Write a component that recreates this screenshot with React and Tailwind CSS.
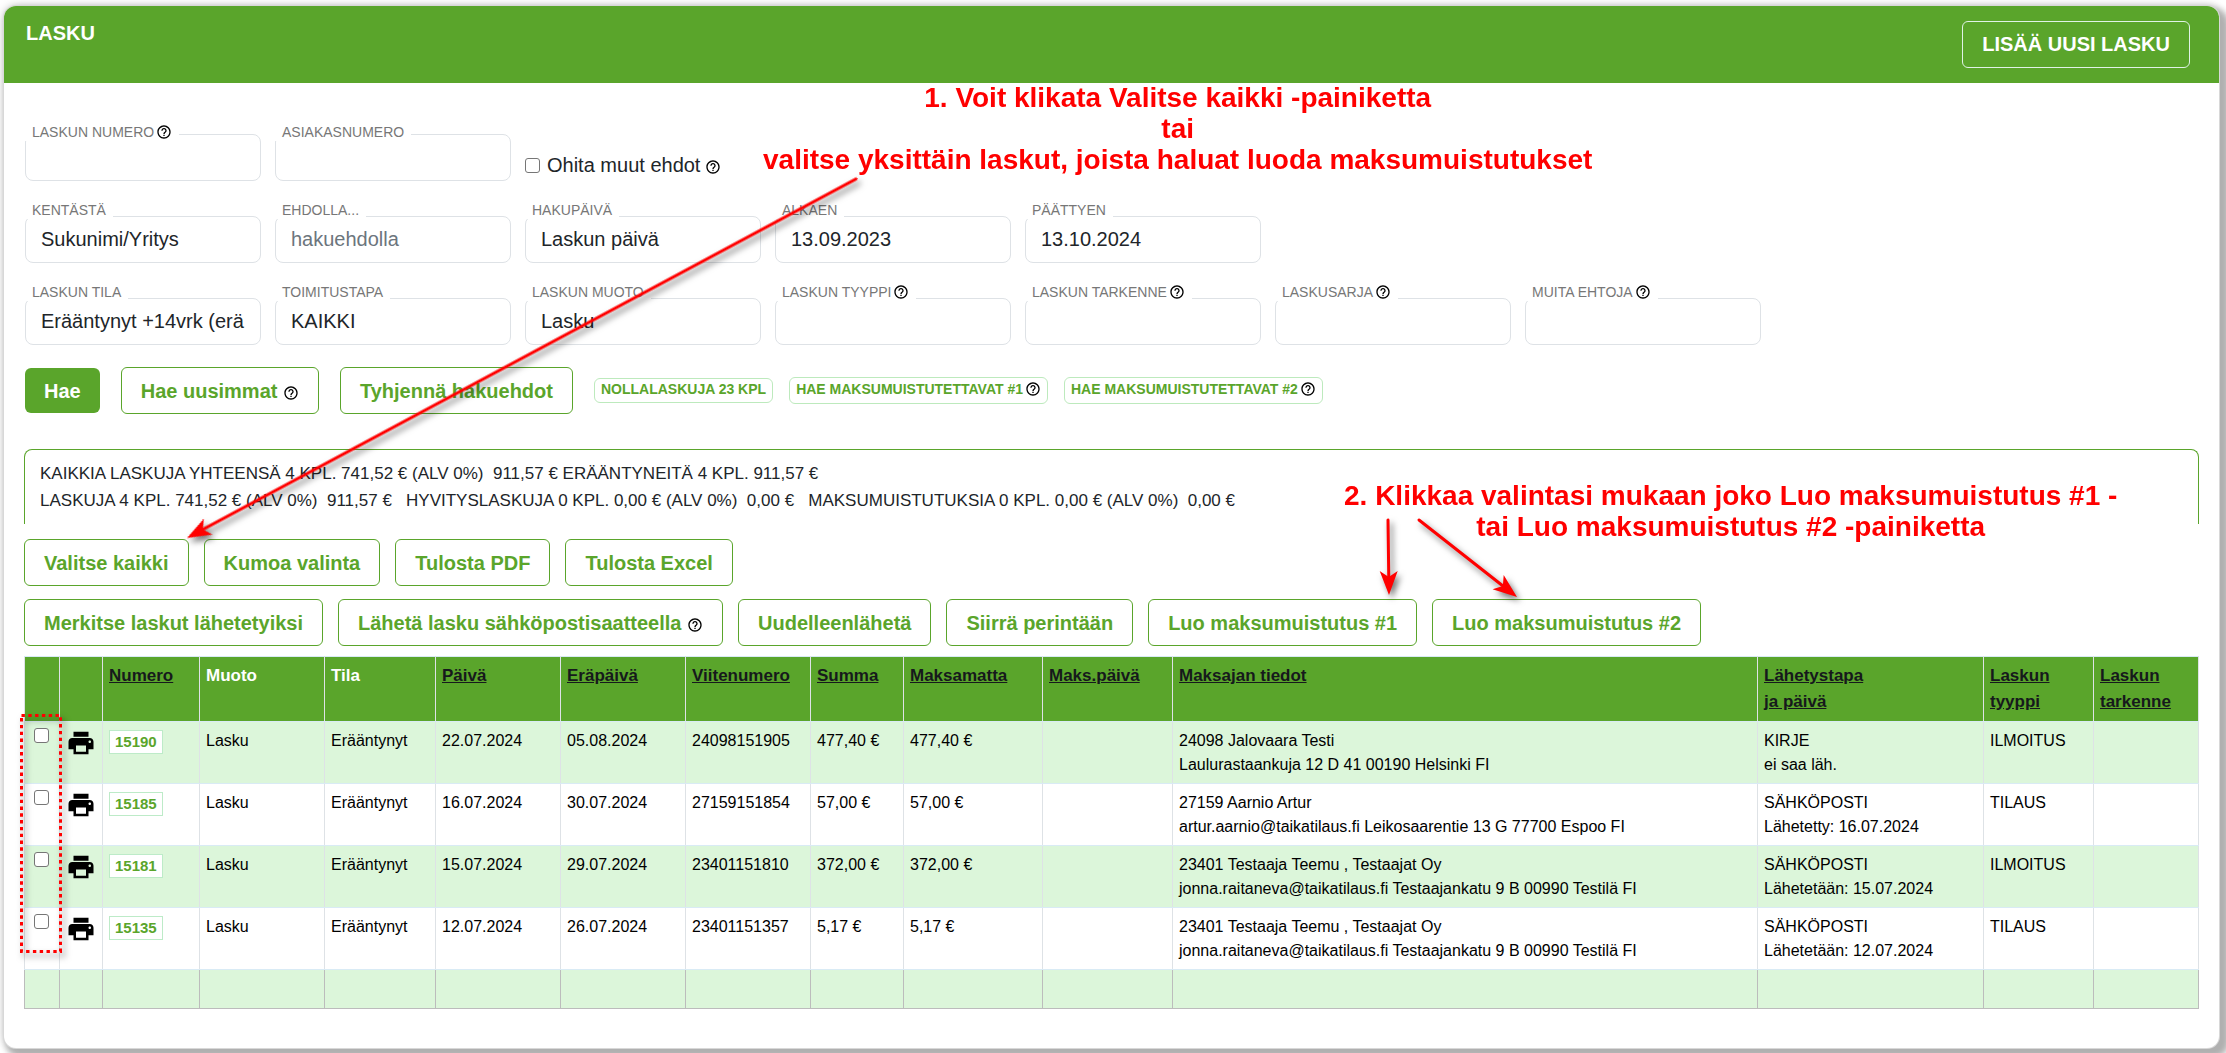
import { MdHelpOutline, MdPrint } from "react-icons/md";

const outline =
  "h-[47px] rounded-md border border-[#5aa52b] bg-white px-[19px] text-[20px] leading-[30px] font-bold whitespace-nowrap text-[#5aa52b]";
const badge =
  "rounded-md border border-[#bdeabd] bg-white px-[6px] pb-[2px] text-[14px] leading-[21px] font-bold whitespace-nowrap text-[#5aa52b]";

function Help({ className = "" }) {
  return (
    <MdHelpOutline
      aria-hidden="true"
      className={"inline-block size-4 align-[-3px] text-black " + className}
    />
  );
}

function Field({ id, label, value, placeholder, help, low }) {
  return (
    <div className="relative w-[236px]">
      <label
        htmlFor={id}
        className={
          "absolute left-0 bg-white px-[7px] text-[14px] leading-[18px] whitespace-nowrap text-[#777] " +
          (low ? "-top-[11px]" : "-top-[15px]")
        }
      >
        {label}
        {help && <Help className="ml-[2px]" />}
      </label>
      <input
        id={id}
        type="text"
        defaultValue={value}
        placeholder={placeholder}
        className="block h-[47px] w-full rounded-lg border border-[#dee2e6] bg-white px-[15px] text-[20px] text-[#212529] placeholder:text-[#6c757d]"
      />
    </div>
  );
}

const columns = [
  { lines: [], w: "w-[35px]" },
  { lines: [], w: "w-[43px]" },
  { lines: ["Numero"], w: "w-[97px]", sort: true },
  { lines: ["Muoto"], w: "w-[125px]" },
  { lines: ["Tila"], w: "w-[111px]" },
  { lines: ["Päivä"], w: "w-[125px]", sort: true },
  { lines: ["Eräpäivä"], w: "w-[125px]", sort: true },
  { lines: ["Viitenumero"], w: "w-[125px]", sort: true },
  { lines: ["Summa"], w: "w-[93px]", sort: true },
  { lines: ["Maksamatta"], w: "w-[139px]", sort: true },
  { lines: ["Maks.päivä"], w: "w-[130px]", sort: true },
  { lines: ["Maksajan tiedot"], w: "", sort: true },
  { lines: ["Lähetystapa", "ja päivä"], w: "w-[226px]", sort: true },
  { lines: ["Laskun", "tyyppi"], w: "w-[110px]", sort: true },
  { lines: ["Laskun", "tarkenne"], w: "w-[105px]", sort: true },
];

const rows = [
  ["15190", "22.07.2024", "05.08.2024", "24098151905", "477,40 €", "24098 Jalovaara Testi", "Laulurastaankuja 12 D 41 00190 Helsinki FI", "KIRJE", "ei saa läh.", "ILMOITUS"],
  ["15185", "16.07.2024", "30.07.2024", "27159151854", "57,00 €", "27159 Aarnio Artur", "artur.aarnio@taikatilaus.fi Leikosaarentie 13 G 77700 Espoo FI", "SÄHKÖPOSTI", "Lähetetty: 16.07.2024", "TILAUS"],
  ["15181", "15.07.2024", "29.07.2024", "23401151810", "372,00 €", "23401 Testaaja Teemu , Testaajat Oy", "jonna.raitaneva@taikatilaus.fi Testaajankatu 9 B 00990 Testilä FI", "SÄHKÖPOSTI", "Lähetetään: 15.07.2024", "ILMOITUS"],
  ["15135", "12.07.2024", "26.07.2024", "23401151357", "5,17 €", "23401 Testaaja Teemu , Testaajat Oy", "jonna.raitaneva@taikatilaus.fi Testaajankatu 9 B 00990 Testilä FI", "SÄHKÖPOSTI", "Lähetetään: 12.07.2024", "TILAUS"],
];

const frame = "border-x border-y border-x-[#dee2e6] border-y-[#d9ebf5] align-top";
const cell = frame + " px-[6px] pt-[7px] pb-[5px]";
const iconCell = frame + " p-[6px]";

function InvoiceTable() {
  return (
    <table className="mt-[10px] w-full table-fixed border-collapse text-left text-[16px] leading-6 text-black">
      <colgroup>
        {columns.map((c, i) => (
          <col key={i} className={c.w} />
        ))}
      </colgroup>
      <thead>
        <tr className="h-[65px] bg-[#5aa52b] text-[17px] leading-[26px] text-white">
          {columns.map((c, i) => (
            <th key={i} scope="col" className={frame + " px-[6px] py-[6px] font-bold"}>
              {c.sort ? (
                <a href="#sort" className="text-[#16191c] underline">
                  {c.lines.map((l) => (
                    <span key={l} className="block">{l}</span>
                  ))}
                </a>
              ) : (
                c.lines[0]
              )}
            </th>
          ))}
        </tr>
      </thead>
      <tbody>
        {rows.map(([no, date, due, ref, sum, payer, address, method, sent, type]) => (
          <tr key={no} className="h-[62px] odd:bg-[#dcf6da] even:bg-white">
            <td className={iconCell}>
              <input
                type="checkbox"
                aria-label={"Valitse lasku " + no}
                className="block size-[15px] translate-x-0 appearance-none rounded-[3px] border border-[#767676] bg-white ml-[3px]"
              />
            </td>
            <td className={iconCell}>
              <button type="button" aria-label={"Tulosta lasku " + no} className="block">
                <MdPrint className="size-[30px]" />
              </button>
            </td>
            <td className={iconCell}>
              <a href="#lasku" className="mt-[2px] inline-block border border-[#bdebc8] bg-white px-[5px] text-[15px] leading-[22px] font-bold text-[#5aa52b]">
                {no}
              </a>
            </td>
            <td className={cell}>Lasku</td>
            <td className={cell}>Erääntynyt</td>
            <td className={cell}>{date}</td>
            <td className={cell}>{due}</td>
            <td className={cell}>{ref}</td>
            <td className={cell}>{sum}</td>
            <td className={cell}>{sum}</td>
            <td className={cell}></td>
            <td className={cell}>{payer}<br />{address}</td>
            <td className={cell}>{method}<br />{sent}</td>
            <td className={cell}>{type}</td>
            <td className={cell}></td>
          </tr>
        ))}
      </tbody>
      <tfoot>
        <tr className="h-[39px] bg-[#dcf6da]">
          {columns.map((c, i) => (
            <td key={i} className="border-x border-b border-[#bcbcbc]"></td>
          ))}
        </tr>
      </tfoot>
    </table>
  );
}

function Arrow({ x1, y1, x2, y2 }) {
  const angle = (Math.atan2(y2 - y1, x2 - x1) * 180) / Math.PI;
  const length = Math.hypot(x2 - x1, y2 - y1);
  return (
    <g transform={`translate(${x2} ${y2}) rotate(${angle})`}>
      <line x1={-length} y1="0" x2="-15" y2="0" stroke="#f00" strokeWidth="3" strokeLinecap="round" />
      <path d="M0 0 L-24 -9 L-18 0 L-24 9 Z" fill="#f00" />
    </g>
  );
}

function Annotations() {
  return (
    <div className="pointer-events-none absolute top-0 left-0 text-center text-[28px] leading-[31px] font-bold whitespace-nowrap text-[#f00]">
      <svg className="absolute top-0 left-0 size-px overflow-visible drop-shadow-[3px_4px_3px_rgba(0,0,0,0.55)]">
        <Arrow x1={856} y1={179} x2={187} y2={538} />
        <Arrow x1={1388} y1={520} x2={1389} y2={595} />
        <Arrow x1={1419} y1={520} x2={1517} y2={597} />
        <rect x="21.5" y="715.5" width="39" height="236" fill="none" stroke="#f00" strokeWidth="3" strokeDasharray="3.4 3.4" />
      </svg>
      <p className="absolute top-[82px] left-[763px]">
        1. Voit klikata Valitse kaikki -painiketta
        <br />
        tai
        <br />
        valitse yksittäin laskut, joista haluat luoda maksumuistutukset
      </p>
      <p className="absolute top-[480px] left-[1344px]">
        2. Klikkaa valintasi mukaan joko Luo maksumuistutus #1 -
        <br />
        tai Luo maksumuistutus #2 -painiketta
      </p>
    </div>
  );
}

export default function App() {
  return (
    <div className="relative overflow-hidden bg-white pt-[6px] pr-[7px] pb-[6px] pl-1 font-['Liberation_Sans',Arial,sans-serif] text-[#212529]">
      <main className="rounded-xl bg-white pb-[39px] shadow-[0_0_0_1px_#d8d8d8,6px_6px_6px_4px_#b0b0b0,0_0_8px_#bbb]">
        <header className="flex h-[77px] items-start justify-between rounded-t-xl bg-[#5aa52b] pt-[15px] pr-[29px] pl-[22px] text-white">
          <h1 className="text-[20px] leading-[24px] font-bold">LASKU</h1>
          <button type="button" className="h-[47px] rounded-md border border-[#dff3e6] px-[19px] pb-[2px] text-[20px] font-bold">
            LISÄÄ UUSI LASKU
          </button>
        </header>

        <div className="px-5">
          <form className="px-px">
            <div className="mt-[51px] flex flex-wrap gap-[14px]">
              <Field id="numero" label="LASKUN NUMERO" help low />
              <Field id="asiakas" label="ASIAKASNUMERO" low />
              <label className="mt-[16px] flex h-[30px] items-center text-[20px]">
                <input type="checkbox" className="mr-[7px] size-[15px] appearance-none rounded-[3px] border border-[#767676] bg-white" />
                Ohita muut ehdot
                <Help className="mt-1 ml-[5px]" />
              </label>
            </div>
            <div className="mt-[35px] flex flex-wrap gap-[14px]">
              <Field id="kentasta" label="KENTÄSTÄ" value="Sukunimi/Yritys" />
              <Field id="ehdolla" label="EHDOLLA..." placeholder="hakuehdolla" />
              <Field id="hakupaiva" label="HAKUPÄIVÄ" value="Laskun päivä" />
              <Field id="alkaen" label="ALKAEN" value="13.09.2023" />
              <Field id="paattyen" label="PÄÄTTYEN" value="13.10.2024" />
            </div>
            <div className="mt-[35px] flex flex-wrap gap-[14px]">
              <Field id="tila" label="LASKUN TILA" value="Erääntynyt +14vrk (erä" />
              <Field id="toimitustapa" label="TOIMITUSTAPA" value="KAIKKI" />
              <Field id="muoto" label="LASKUN MUOTO" value="Lasku" />
              <Field id="tyyppi" label="LASKUN TYYPPI" help />
              <Field id="tarkenne" label="LASKUN TARKENNE" help />
              <Field id="sarja" label="LASKUSARJA" help />
              <Field id="muita" label="MUITA EHTOJA" help />
            </div>
            <div className="mt-[22px] flex flex-wrap items-center gap-4">
              <div className="flex gap-[21px] pr-[5px]">
                <button type="button" className="my-px h-[45px] rounded-md bg-[#5aa52b] px-[19px] text-[20px] font-bold text-white">
                  Hae
                </button>
                <button type="button" className={outline}>
                  Hae uusimmat <Help />
                </button>
                <button type="button" className={outline}>Tyhjennä hakuehdot</button>
              </div>
              <button type="button" className={badge + " h-[25px]"}>NOLLALASKUJA 23 KPL</button>
              <button type="button" className={badge + " h-[27px]"}>
                HAE MAKSUMUISTUTETTAVAT #1<Help className="ml-[2px]" />
              </button>
              <button type="button" className={badge + " h-[27px]"}>
                HAE MAKSUMUISTUTETTAVAT #2<Help className="ml-[2px]" />
              </button>
            </div>
          </form>

          <section className="mt-[35px] h-[75px] rounded-t-lg border-x border-t border-[#5aa52b] px-[15px] pt-[10px] text-[17px] leading-[27px] whitespace-pre">
            <p>{"KAIKKIA LASKUJA YHTEENSÄ 4 KPL. 741,52 € (ALV 0%)  911,57 € ERÄÄNTYNEITÄ 4 KPL. 911,57 €"}</p>
            <p>{"LASKUJA 4 KPL. 741,52 € (ALV 0%)  911,57 €   HYVITYSLASKUJA 0 KPL. 0,00 € (ALV 0%)  0,00 €   MAKSUMUISTUTUKSIA 0 KPL. 0,00 € (ALV 0%)  0,00 €"}</p>
          </section>

          <div className="mt-[15px] flex flex-wrap gap-[15px]">
            <button type="button" className={outline}>Valitse kaikki</button>
            <button type="button" className={outline}>Kumoa valinta</button>
            <button type="button" className={outline}>Tulosta PDF</button>
            <button type="button" className={outline}>Tulosta Excel</button>
          </div>
          <div className="mt-[13px] flex flex-wrap gap-[15px]">
            <button type="button" className={outline}>Merkitse laskut lähetetyiksi</button>
            <button type="button" className={outline}>
              Lähetä lasku sähköpostisaatteella <Help />
            </button>
            <button type="button" className={outline}>Uudelleenlähetä</button>
            <button type="button" className={outline}>Siirrä perintään</button>
            <button type="button" className={outline}>Luo maksumuistutus #1</button>
            <button type="button" className={outline}>Luo maksumuistutus #2</button>
          </div>

          <InvoiceTable />
        </div>
      </main>
      <Annotations />
    </div>
  );
}
